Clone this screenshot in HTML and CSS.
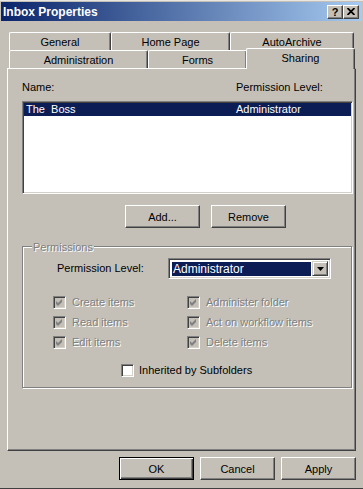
FILE: index.html
```html
<!doctype html>
<html lang="en">
 <head>
  <meta charset="utf-8">
  <title>Inbox Properties</title>
  <link rel="stylesheet" href="styles.css">
 </head>
 <body>
  <div class="window">
   <div class="titlebar">
    <span class="title-text">Inbox Properties</span>
    <div class="title-buttons">
     <div class="title-btn help">?</div>
     <div class="title-btn close">
      <svg width="8" height="7" viewBox="0 0 8 7"><path d="M0.5 0 L7.5 7 M7.5 0 L0.5 7" stroke="#000" stroke-width="1.8"/></svg>
     </div>
    </div>
   </div>
   <div class="dialog">
    <div class="tabs">
     <div class="tab-row back">
      <div class="tab tab-general">General</div>
      <div class="tab tab-homepage">Home Page</div>
      <div class="tab tab-autoarchive">AutoArchive</div>
     </div>
     <div class="tab-row front">
      <div class="tab tab-admin">Administration</div>
      <div class="tab tab-forms">Forms</div>
      <div class="tab tab-sharing active">Sharing</div>
     </div>
    </div>
    <div class="panel">
     <div class="list-header">
      <span class="col-name">Name:</span>
      <span>Permission Level:</span>
     </div>
     <div class="listbox">
      <div class="list-row selected">
       <span class="col-name">The &nbsp;Boss</span>
       <span>Administrator</span>
      </div>
     </div>
     <div class="list-buttons">
      <div class="btn">Add...</div>
      <div class="btn">Remove</div>
     </div>
     <div class="group">
      <span class="group-label disabled-text">Permissions</span>
      <div class="level-row">
       <span class="level-label">Permission Level:</span>
       <div class="combo">
        <div class="combo-value">Administrator</div>
        <div class="combo-btn">
         <svg width="7" height="4" viewBox="0 0 7 4"><polygon points="0,0 7,0 3.5,4" fill="#000"/></svg>
        </div>
       </div>
      </div>
      <div class="checks">
       <div class="check"><span class="box disabled"><svg width="9" height="9" viewBox="0 0 9 9"><polygon points="1,3 3,5 7,1 7,4 3,8 1,6" fill="#808080"/></svg></span><span class="disabled-text">Create items</span></div>
       <div class="check"><span class="box disabled"><svg width="9" height="9" viewBox="0 0 9 9"><polygon points="1,3 3,5 7,1 7,4 3,8 1,6" fill="#808080"/></svg></span><span class="disabled-text">Administer folder</span></div>
       <div class="check"><span class="box disabled"><svg width="9" height="9" viewBox="0 0 9 9"><polygon points="1,3 3,5 7,1 7,4 3,8 1,6" fill="#808080"/></svg></span><span class="disabled-text">Read items</span></div>
       <div class="check"><span class="box disabled"><svg width="9" height="9" viewBox="0 0 9 9"><polygon points="1,3 3,5 7,1 7,4 3,8 1,6" fill="#808080"/></svg></span><span class="disabled-text">Act on workflow items</span></div>
       <div class="check"><span class="box disabled"><svg width="9" height="9" viewBox="0 0 9 9"><polygon points="1,3 3,5 7,1 7,4 3,8 1,6" fill="#808080"/></svg></span><span class="disabled-text">Edit items</span></div>
       <div class="check"><span class="box disabled"><svg width="9" height="9" viewBox="0 0 9 9"><polygon points="1,3 3,5 7,1 7,4 3,8 1,6" fill="#808080"/></svg></span><span class="disabled-text">Delete items</span></div>
      </div>
      <div class="check inherit"><span class="box"></span><span>Inherited by Subfolders</span></div>
     </div>
    </div>
    <div class="footer">
     <div class="btn default">OK</div>
     <div class="btn">Cancel</div>
     <div class="btn">Apply</div>
    </div>
   </div>
  </div>
 </body>
</html>
```

FILE: styles.css
```css
body {
	margin: 0;
	padding: 0;
	background: #c4c0b8;
	font-family: "Liberation Sans", Arial, sans-serif;
	font-size: 11px;
	color: #000;
}

.window {
	width: 363px;
	height: 489px;
	box-sizing: border-box;
	background: #c4c0b8;
	border-top: 1px solid #e8e6e0;
	border-bottom: 1px solid #404040;
	padding: 1px 1px 0 1px;
}

/* title bar */
.titlebar {
	height: 19px;
	display: flex;
	align-items: center;
	justify-content: space-between;
	background: linear-gradient(to right, #0a246a, #a6caf0);
	padding: 0 3px 0 2px;
}

.title-text {
	color: #fff;
	font-weight: bold;
	font-size: 12px;
	line-height: 19px;
	padding-top: 1px;
}

.title-buttons {
	display: flex;
}

.title-btn {
	width: 16px;
	height: 14px;
	box-sizing: border-box;
	background: #c4c0b8;
	border: 1px solid;
	border-color: #fff #404040 #404040 #fff;
	box-shadow: inset -1px -1px #808080;
	display: flex;
	align-items: center;
	justify-content: center;
	font-weight: bold;
	font-size: 11px;
	line-height: 12px;
}

.dialog {
	padding: 11px 6px 0 6px;
}

/* tabs */
.tabs {
	position: relative;
	z-index: 2;
	padding-left: 2px;
}

.tab-row {
	display: flex;
	height: 18px;
}

.tab-row.front {
	align-items: flex-end;
}

.tab {
	height: 18px;
	box-sizing: border-box;
	border-top: 1px solid #fff;
	border-left: 1px solid #fff;
	border-right: 1px solid #404040;
	border-radius: 2px 2px 0 0;
	box-shadow: inset -1px 0 #808080;
	background: #c4c0b8;
	text-align: center;
	line-height: 16px;
	padding-top: 1px;
}

.tab-general { width: 102px; }
.tab-homepage { width: 119px; }
.tab-autoarchive { width: 124px; }
.tab-admin { width: 139px; }
.tab-forms { width: 99px; }

.tab.active {
	width: 109px;
	height: 21px;
	margin-left: -1px;
	margin-bottom: -1px;
}

/* page */
.panel {
	position: relative;
	z-index: 1;
	height: 383px;
	box-sizing: border-box;
	border: 1px solid #404040;
	border-top-color: #fff;
	border-left-color: #fff;
	box-shadow: inset -1px -1px #808080;
	padding: 12px 0 0 14px;
}

.list-header,
.list-row {
	display: flex;
	line-height: 13px;
}

.list-header .col-name {
	width: 214px;
}

.listbox {
	margin-top: 7px;
	width: 331px;
	height: 93px;
	box-sizing: border-box;
	background: #fff;
	border: 1px solid;
	border-color: #808080 #fff #fff #808080;
	box-shadow: inset 1px 1px #404040, inset -1px -1px #d4d0c8;
	padding: 1px;
}

.list-row {
	padding-left: 2px;
}

.list-row .col-name {
	width: 210px;
}

.list-row.selected {
	background: #0c1c55;
	color: #fff;
}

.list-buttons {
	display: flex;
	gap: 11px;
	margin: 11px 0 0 103px;
}

.btn {
	width: 75px;
	height: 23px;
	box-sizing: border-box;
	border: 1px solid;
	border-color: #fff #404040 #404040 #fff;
	box-shadow: inset -1px -1px #808080;
	display: flex;
	align-items: center;
	justify-content: center;
	background: #c4c0b8;
}

.btn.default {
	border-color: #000;
	box-shadow: inset 1px 1px #fff, inset -1px -1px #404040, inset -2px -2px #808080;
}

/* group box */
.group {
	position: relative;
	margin-top: 18px;
	width: 330px;
	height: 142px;
	box-sizing: border-box;
	border: 1px solid #808080;
	box-shadow: inset 1px 1px #fff, 1px 1px #fff;
	padding: 11px 0 0 34px;
}

.group-label {
	position: absolute;
	top: -6px;
	left: 9px;
	padding: 0 1px;
	background: #c4c0b8;
	line-height: 13px;
}

.disabled-text {
	color: #808080;
	text-shadow: 1px 1px 0 #fff;
}

.level-row {
	display: flex;
	align-items: center;
	line-height: 13px;
}

.level-label {
	width: 111px;
}

.combo {
	width: 163px;
	height: 21px;
	box-sizing: border-box;
	background: #fff;
	border: 1px solid;
	border-color: #808080 #fff #fff #808080;
	box-shadow: inset 1px 1px #404040, inset -1px -1px #d4d0c8;
	padding: 2px;
	display: flex;
}

.combo-value {
	flex: 1;
	margin: 1px 1px 0 1px;
	background: #0c1c55;
	color: #fff;
	line-height: 15px;
	padding-left: 1px;
	font-size: 12px;
}

.combo-btn {
	width: 16px;
	box-sizing: border-box;
	background: #c4c0b8;
	border: 1px solid;
	border-color: #d4d0c8 #404040 #404040 #d4d0c8;
	box-shadow: inset 1px 1px #fff, inset -1px -1px #808080;
	display: flex;
	align-items: center;
	justify-content: center;
}

.checks {
	display: grid;
	grid-template-columns: 134px 1fr;
	grid-auto-rows: 20px;
	margin: 13px 0 0 -4px;
}

.check {
	display: flex;
	align-items: center;
	gap: 6px;
	line-height: 13px;
}

.box {
	width: 13px;
	height: 13px;
	box-sizing: border-box;
	background: #fff;
	border: 1px solid;
	border-color: #808080 #fff #fff #808080;
	box-shadow: inset 1px 1px #404040, inset -1px -1px #d4d0c8;
	display: flex;
	align-items: center;
	justify-content: center;
}

.box.disabled {
	background: #c4c0b8;
}

.check.inherit {
	height: 20px;
	margin: 8px 0 0 64px;
	gap: 5px;
}

/* dialog buttons */
.footer {
	display: flex;
	justify-content: flex-end;
	gap: 6px;
	margin-top: 6px;
}
```
